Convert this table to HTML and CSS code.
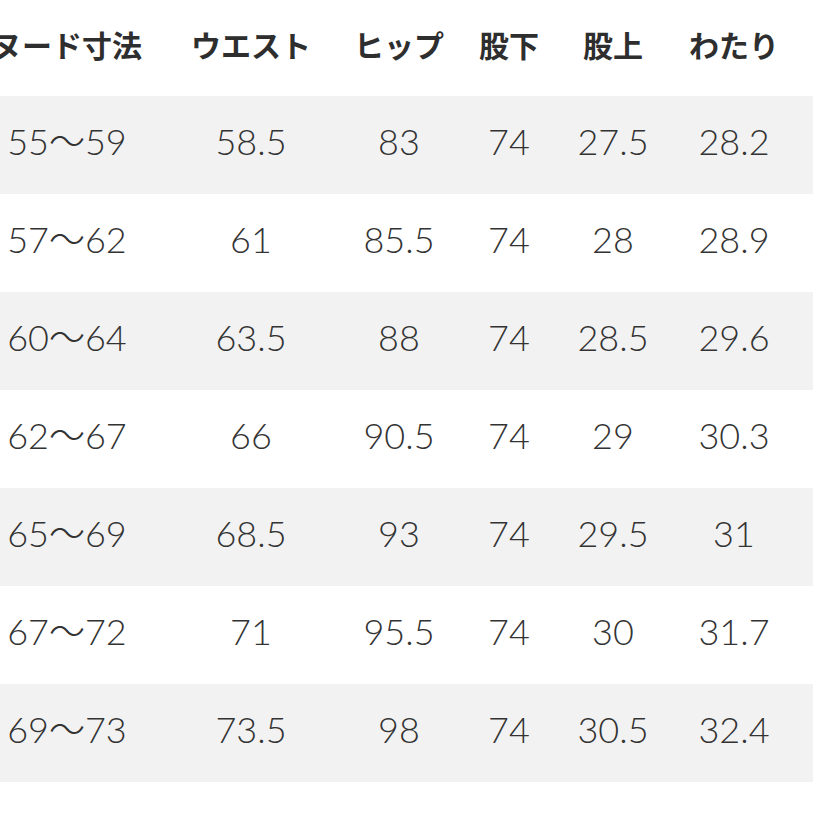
FILE: index.html
```html
<!DOCTYPE html>
<html lang="ja">
<head>
<meta charset="utf-8">
<link rel="stylesheet" href="styles.css">
</head>
<body>
<div class="table">
  <div class="row head">
    <div class="cells">
      <div class="c">ヌード寸法</div><div class="c">ウエスト</div><div class="c">ヒップ</div><div class="c">股下</div><div class="c">股上</div><div class="c">わたり</div>
    </div>
  </div>
  <div class="row alt"><div class="cells"><div class="c">55〜59</div><div class="c">58.5</div><div class="c">83</div><div class="c">74</div><div class="c">27.5</div><div class="c">28.2</div></div></div>
  <div class="row"><div class="cells"><div class="c">57〜62</div><div class="c">61</div><div class="c">85.5</div><div class="c">74</div><div class="c">28</div><div class="c">28.9</div></div></div>
  <div class="row alt"><div class="cells"><div class="c">60〜64</div><div class="c">63.5</div><div class="c">88</div><div class="c">74</div><div class="c">28.5</div><div class="c">29.6</div></div></div>
  <div class="row"><div class="cells"><div class="c">62〜67</div><div class="c">66</div><div class="c">90.5</div><div class="c">74</div><div class="c">29</div><div class="c">30.3</div></div></div>
  <div class="row alt"><div class="cells"><div class="c">65〜69</div><div class="c">68.5</div><div class="c">93</div><div class="c">74</div><div class="c">29.5</div><div class="c">31</div></div></div>
  <div class="row"><div class="cells"><div class="c">67〜72</div><div class="c">71</div><div class="c">95.5</div><div class="c">74</div><div class="c">30</div><div class="c">31.7</div></div></div>
  <div class="row alt"><div class="cells"><div class="c">69〜73</div><div class="c">73.5</div><div class="c">98</div><div class="c">74</div><div class="c">30.5</div><div class="c">32.4</div></div></div>
</div>
</body>
</html>
```
FILE: styles.css
```css
html, body {
  margin: 0;
  padding: 0;
  width: 100%;
  background: #ffffff;
  overflow: hidden;
}
body {
  font-family: "Noto Sans CJK JP", "Noto Sans", sans-serif;
  color: #333333;
}
.table {
  display: flex;
  flex-direction: column;
  width: 100%;
}
.row {
  box-sizing: border-box;
  width: 100%;
  height: 98px;
  padding-bottom: 8px;
  display: flex;
  align-items: center;
  overflow: hidden;
}
.row.head {
  height: 96px;
}
.row.alt {
  background: #f2f2f2;
}
.cells {
  flex: none;
  display: grid;
  grid-template-columns: 184px 184px 112px 108px 100px 142px;
  margin-left: -25px;
  font-family: "Lato", "Noto Sans CJK JP", sans-serif;
  font-size: 36px;
  font-weight: 300;
  line-height: 1;
}
.head .cells {
  font-family: "Noto Sans CJK JP", sans-serif;
  font-size: 30px;
  font-weight: 700;
  color: #2e2e2e;
}
.c {
  text-align: center;
  white-space: nowrap;
}
```
